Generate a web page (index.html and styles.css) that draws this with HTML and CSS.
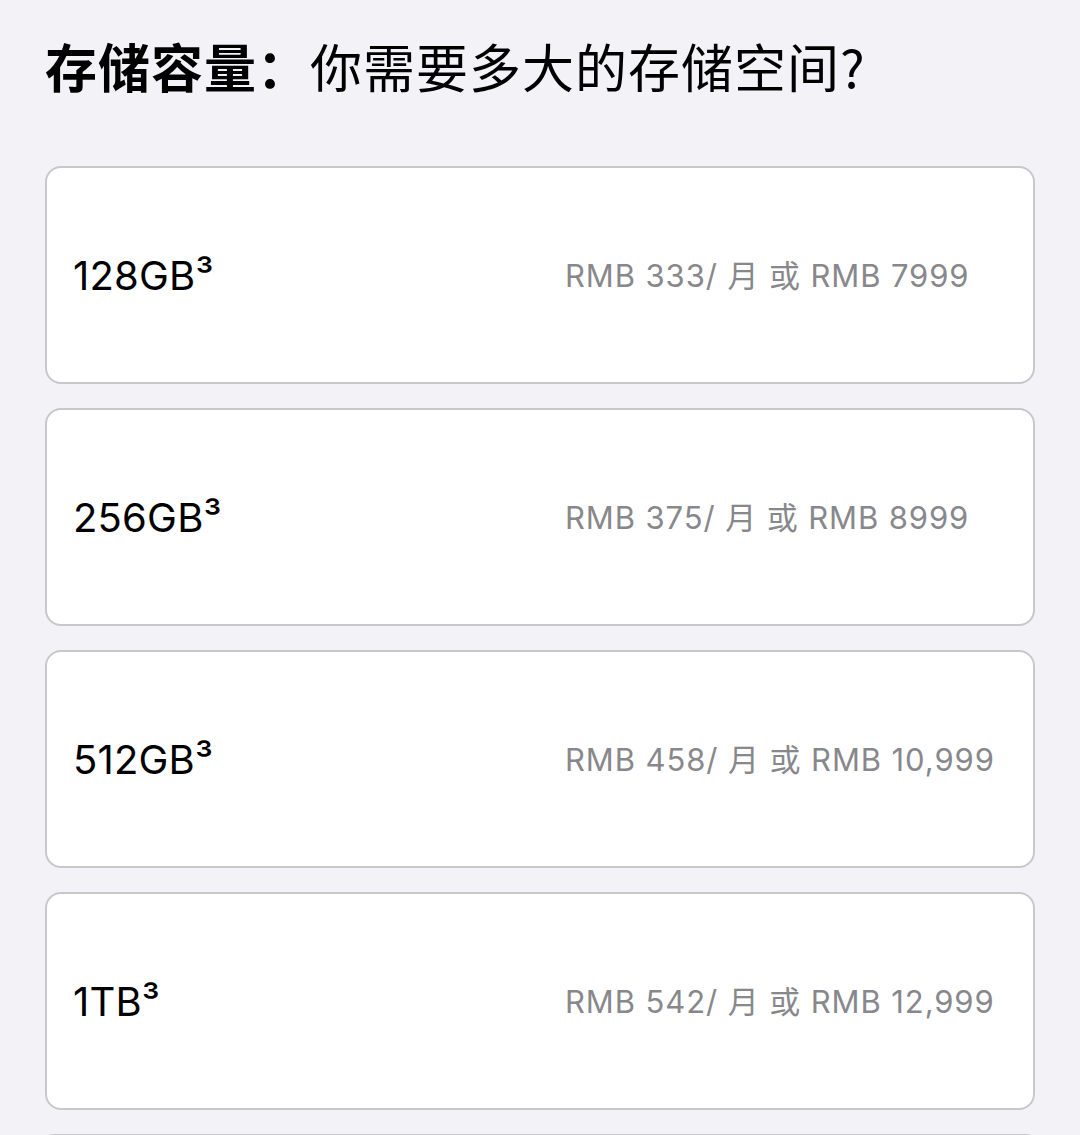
FILE: index.html
```html
<!DOCTYPE html>
<html lang="zh-CN">
<head>
<meta charset="utf-8">
<link rel="stylesheet" href="styles.css">
</head>
<body>
<main class="page">
  <h1 class="title"><span class="title-strong">存储容量：</span>你需要多大的存储空间?</h1>
  <div class="options">
    <div class="option">
      <div class="cap">128GB³</div>
      <div class="price">RMB 333/ 月 或 RMB 7999</div>
    </div>
    <div class="option">
      <div class="cap">256GB³</div>
      <div class="price">RMB 375/ 月 或 RMB 8999</div>
    </div>
    <div class="option">
      <div class="cap">512GB³</div>
      <div class="price">RMB 458/ 月 或 RMB 10,999</div>
    </div>
    <div class="option">
      <div class="cap">1TB³</div>
      <div class="price">RMB 542/ 月 或 RMB 12,999</div>
    </div>
    <div class="option option-peek"></div>
  </div>
</main>
</body>
</html>
```
FILE: styles.css
```css
html, body {
  margin: 0;
  padding: 0;
  background: #f2f2f7;
  height: 1135px;
  overflow: hidden;
}
.page {
  padding: 28px 45px 0 45px;
  font-family: Inter, "Noto Sans CJK SC", sans-serif;
  color: #000;
}
.title {
  margin: 0;
  font-family: "Noto Sans CJK SC", sans-serif;
  font-size: 52px;
  font-weight: 400;
  line-height: 76px;
  letter-spacing: 1px;
}
.title-strong {
  font-weight: 700;
}
.options {
  margin-top: 62px;
  display: flex;
  flex-direction: column;
  gap: 24px;
}
.option {
  height: 212px;
  background: #fff;
  border: 2px solid #c8c8cc;
  border-radius: 16px;
  display: flex;
  align-items: center;
  padding: 2px 26px 0 26px;
  box-sizing: content-box;
  flex-shrink: 0;
}
.option-peek {
  height: 10px;
}
.cap {
  width: 492px;
  font-size: 40px;
  line-height: 48px;
  letter-spacing: 0.2px;
}
.price {
  font-size: 31px;
  line-height: 38px;
  color: #88888c;
  letter-spacing: 0.9px;
}
```
